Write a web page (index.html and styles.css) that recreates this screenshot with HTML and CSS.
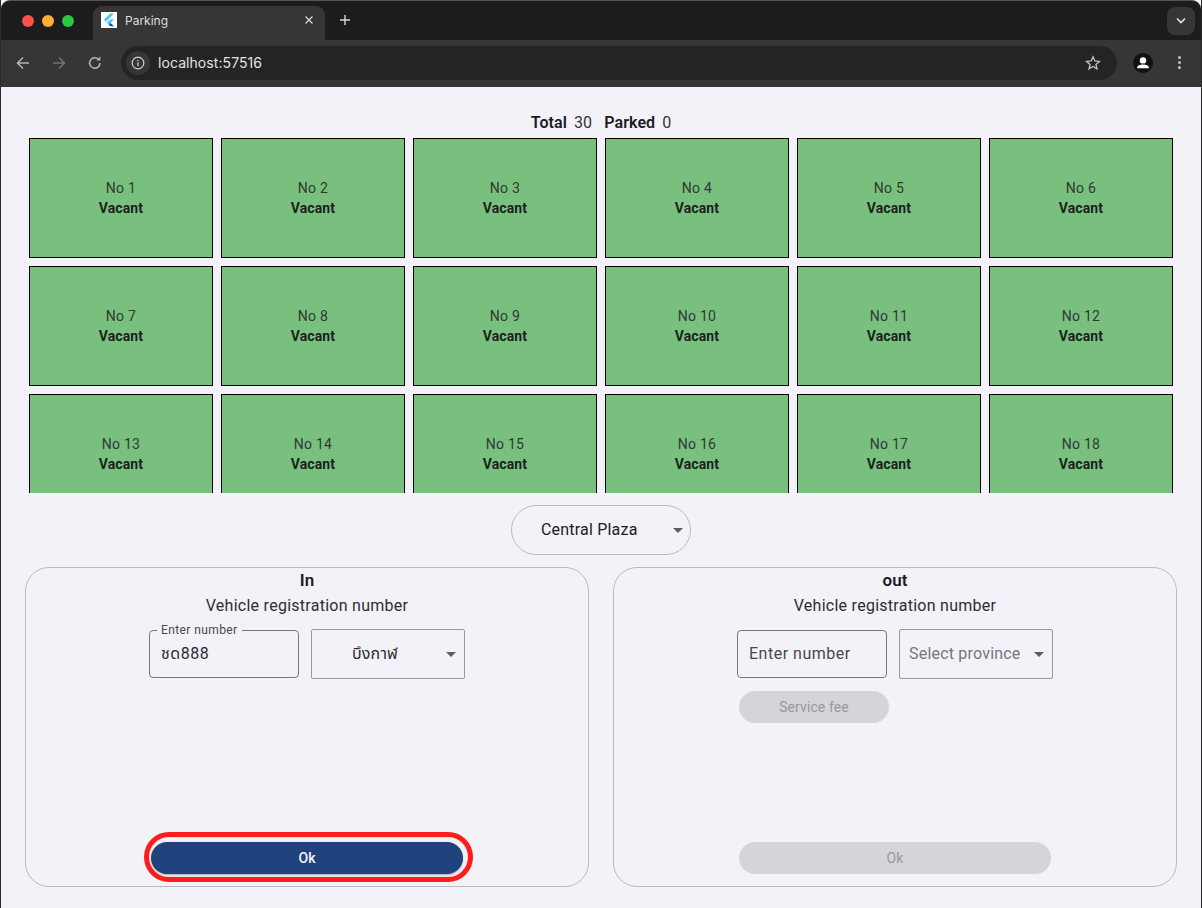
FILE: index.html
```html
<!DOCTYPE html>
<html lang="en">
<head>
    <meta charset="UTF-8">
    <meta name="viewport" content="width=device-width, initial-scale=1.0">
    <title>Parking</title>
    <link rel="stylesheet" href="styles.css">
</head>
<body>
    <div class="window">
        <!-- browser tab strip -->
        <div class="tabstrip">
            <div class="lights">
                <span class="light red"></span>
                <span class="light yellow"></span>
                <span class="light green"></span>
            </div>
            <div class="tab">
                <span class="favicon">
                    <svg width="16" height="16" viewBox="0 0 16 16">
                        <path d="M9.2 1.5 L3 7.8 L4.9 9.7 L13 1.5 Z" fill="#47c5fb"/>
                        <path d="M9.2 7.6 L5.9 10.8 L7.8 12.7 L13 7.6 Z" fill="#47c5fb"/>
                        <path d="M7.8 12.7 L9.2 14.3 L13 14.3 L9.7 10.9 Z" fill="#00569e"/>
                    </svg>
                </span>
                <span class="tab-title">Parking</span>
                <svg class="tab-close" width="10" height="10" viewBox="0 0 10 10">
                    <path d="M1.5 1.5 L8.5 8.5 M8.5 1.5 L1.5 8.5" stroke="#d6d6d6" stroke-width="1.3"/>
                </svg>
            </div>
            <svg class="new-tab" width="12" height="12" viewBox="0 0 12 12">
                <path d="M6 1 V11 M1 6 H11" stroke="#d8d8d8" stroke-width="1.4"/>
            </svg>
            <div class="tab-search">
                <svg width="12" height="8" viewBox="0 0 12 8">
                    <path d="M2 1.5 L6 5.5 L10 1.5" fill="none" stroke="#e6e6e6" stroke-width="1.6"/>
                </svg>
            </div>
        </div>

        <!-- browser toolbar -->
        <div class="toolbar">
            <svg class="nav-icon" width="16" height="16" viewBox="0 0 16 16">
                <path d="M14 8 H2.5 M8 2.5 L2.5 8 L8 13.5" fill="none" stroke="#b4b4b4" stroke-width="1.5"/>
            </svg>
            <svg class="nav-icon" width="16" height="16" viewBox="0 0 16 16">
                <path d="M2 8 H13.5 M8 2.5 L13.5 8 L8 13.5" fill="none" stroke="#727272" stroke-width="1.5"/>
            </svg>
            <svg class="nav-icon" width="16" height="16" viewBox="0 0 16 16">
                <path d="M13 8 A5.2 5.2 0 1 1 11.4 4.2" fill="none" stroke="#b4b4b4" stroke-width="1.5"/>
                <path d="M13.3 1.6 V5.6 H9.3 Z" fill="#b4b4b4"/>
            </svg>
            <div class="omnibox">
                <span class="site-info">
                    <svg width="14" height="14" viewBox="0 0 14 14">
                        <circle cx="7" cy="7" r="5.8" fill="none" stroke="#d0d0d0" stroke-width="1.2"/>
                        <path d="M7 6.2 V10 M7 4 V5.2" stroke="#d0d0d0" stroke-width="1.3"/>
                    </svg>
                </span>
                <span class="url">localhost:57516</span>
                <svg class="star" width="16" height="16" viewBox="0 0 16 16">
                    <path d="M8 1.8 L9.8 6 L14.4 6.4 L10.9 9.4 L12 13.9 L8 11.5 L4 13.9 L5.1 9.4 L1.6 6.4 L6.2 6 Z" fill="none" stroke="#c4c4c4" stroke-width="1.3"/>
                </svg>
            </div>
            <span class="avatar">
                <svg width="20" height="20" viewBox="0 0 20 20">
                    <circle cx="10" cy="7.4" r="3.2" fill="#fff"/>
                    <path d="M4 15.2 C4 12.2 7 11.4 10 11.4 C13 11.4 16 12.2 16 15.2 Z" fill="#fff"/>
                </svg>
            </span>
            <span class="kebab"><i></i><i></i><i></i></span>
        </div>

        <!-- app -->
        <main class="app">
            <div class="summary">
                <b>Total</b><span>30</span><b class="summary-gap">Parked</b><span>0</span>
            </div>

            <div class="slots-scroll">
                <div class="slots">
                    <div class="slot"><span>No 1</span><b>Vacant</b></div>
                    <div class="slot"><span>No 2</span><b>Vacant</b></div>
                    <div class="slot"><span>No 3</span><b>Vacant</b></div>
                    <div class="slot"><span>No 4</span><b>Vacant</b></div>
                    <div class="slot"><span>No 5</span><b>Vacant</b></div>
                    <div class="slot"><span>No 6</span><b>Vacant</b></div>
                    <div class="slot"><span>No 7</span><b>Vacant</b></div>
                    <div class="slot"><span>No 8</span><b>Vacant</b></div>
                    <div class="slot"><span>No 9</span><b>Vacant</b></div>
                    <div class="slot"><span>No 10</span><b>Vacant</b></div>
                    <div class="slot"><span>No 11</span><b>Vacant</b></div>
                    <div class="slot"><span>No 12</span><b>Vacant</b></div>
                    <div class="slot"><span>No 13</span><b>Vacant</b></div>
                    <div class="slot"><span>No 14</span><b>Vacant</b></div>
                    <div class="slot"><span>No 15</span><b>Vacant</b></div>
                    <div class="slot"><span>No 16</span><b>Vacant</b></div>
                    <div class="slot"><span>No 17</span><b>Vacant</b></div>
                    <div class="slot"><span>No 18</span><b>Vacant</b></div>
                </div>
            </div>

            <div class="plaza-row">
                <div class="plaza">
                    <span>Central Plaza</span>
                    <i class="caret"></i>
                </div>
            </div>

            <div class="panels">
                <section class="panel">
                    <h2>In</h2>
                    <p class="panel-sub">Vehicle registration number</p>
                    <div class="fields">
                        <div class="field filled">
                            <label>Enter number</label>
                            <span>ชด888</span>
                        </div>
                        <div class="dropdown">
                            <span class="dropdown-value">บึงกาฬ</span>
                            <i class="caret"></i>
                        </div>
                    </div>
                    <div class="ok-wrap">
                        <button class="btn btn-primary">Ok</button>
                        <span class="highlight"></span>
                    </div>
                </section>

                <section class="panel">
                    <h2>out</h2>
                    <p class="panel-sub">Vehicle registration number</p>
                    <div class="fields">
                        <div class="field">
                            <span>Enter number</span>
                        </div>
                        <div class="dropdown">
                            <span class="dropdown-hint">Select province</span>
                            <i class="caret"></i>
                        </div>
                    </div>
                    <div class="fee-row">
                        <button class="btn btn-disabled btn-fee">Service fee</button>
                    </div>
                    <div class="ok-wrap">
                        <button class="btn btn-disabled">Ok</button>
                    </div>
                </section>
            </div>
        </main>
    </div>
</body>
</html>
```

FILE: styles.css
```css
* {
    box-sizing: border-box;
}

html, body {
    margin: 0;
    padding: 0;
    height: 100%;
    background-color: #f3f2f9;
}

body {
    font-family: Roboto, "Noto Sans", "Noto Sans Thai", sans-serif;
    color: #1c1b1f;
    overflow: hidden;
}

.window {
    width: 1202px;
    height: 908px;
    display: flex;
    flex-direction: column;
    border-left: 1px solid #2a2a2a;
    border-right: 1px solid #2a2a2a;
}

/* browser chrome */
.tabstrip {
    height: 40px;
    flex: none;
    display: flex;
    align-items: flex-end;
    background-color: #1c1c1c;
    border-top: 1px solid #555;
    border-radius: 9px 9px 0 0;
    font-family: Inter, "Liberation Sans", Arial, sans-serif;
}

.lights {
    display: flex;
    gap: 8px;
    width: 92px;
    padding: 0 0 0 21px;
    align-self: center;
    margin-top: 1px;
}

.light {
    width: 12px;
    height: 12px;
    border-radius: 50%;
}

.red { background-color: #ff4f4d; }
.yellow { background-color: #ffae33; }
.green { background-color: #29c840; }

.tab {
    width: 232px;
    height: 34px;
    display: flex;
    align-items: center;
    padding: 0 11px 6px 8px;
    background-color: #363636;
    border-radius: 9px 9px 0 0;
}

.favicon {
    width: 16px;
    height: 16px;
    background-color: #fff;
    display: flex;
}

.tab-title {
    margin-left: 8px;
    font-size: 12px;
    color: #dedede;
    flex: 1;
}

.new-tab {
    margin: 0 0 14px 14px;
}

.tab-search {
    width: 28px;
    height: 28px;
    margin: 0 6px 5px auto;
    border-radius: 8px;
    background-color: #363636;
    display: flex;
    align-items: center;
    justify-content: center;
}

.toolbar {
    height: 47px;
    flex: none;
    display: flex;
    align-items: center;
    padding: 0 0 2px 14px;
    background-color: #363636;
    font-family: Inter, "Liberation Sans", Arial, sans-serif;
}

.nav-icon {
    margin-right: 20px;
}

.nav-icon:nth-child(3) {
    margin-right: 18px;
}

.omnibox {
    width: 996px;
    height: 34px;
    padding: 0 16px 0 5px;
    display: flex;
    align-items: center;
    background-color: #242424;
    border-radius: 17px;
}

.site-info {
    width: 24px;
    height: 24px;
    border-radius: 50%;
    background-color: #363636;
    display: flex;
    align-items: center;
    justify-content: center;
}

.url {
    margin-left: 8px;
    font-size: 14px;
    letter-spacing: 0.07px;
    color: #e3e3e3;
    flex: 1;
}

.avatar {
    width: 20px;
    height: 20px;
    margin-left: 16px;
    border-radius: 50%;
    background-color: #111;
    display: flex;
}

.kebab {
    margin-left: 25px;
    display: flex;
    flex-direction: column;
    gap: 2px;
}

.kebab i {
    width: 3px;
    height: 3px;
    border-radius: 50%;
    background-color: #c4c4c4;
}

/* app */
.app {
    flex: 1;
    display: flex;
    flex-direction: column;
    padding: 0 24px 20px;
    background-color: #f3f2f9;
    min-height: 0;
}

.summary {
    height: 51px;
    flex: none;
    padding-bottom: 5px;
    display: flex;
    align-items: flex-end;
    justify-content: center;
    gap: 7px;
    font-size: 16px;
    line-height: 20px;
    letter-spacing: 0.1px;
}

.summary b {
    font-weight: 600;
}

.summary span {
    color: #35333a;
}

.summary-gap {
    margin-left: 5px;
}

.slots-scroll {
    height: 355px;
    flex: none;
    overflow: hidden;
    padding: 0 4px;
}

.slots {
    display: grid;
    grid-template-columns: repeat(6, 184px);
    grid-auto-rows: 120px;
    gap: 8px;
}

.slot {
    display: flex;
    flex-direction: column;
    align-items: center;
    justify-content: center;
    background-color: #79c07f;
    border: 1px solid #000;
    font-size: 14px;
    line-height: 20px;
}

.slot span {
    letter-spacing: 0.25px;
    color: #333733;
}

.slot b {
    font-weight: 700;
    letter-spacing: 0.1px;
    color: #1c211d;
}

.plaza-row {
    display: flex;
    justify-content: center;
    margin-top: 12px;
    flex: none;
}

.plaza {
    width: 180px;
    height: 50px;
    padding: 0 7px 2px 29px;
    display: flex;
    align-items: center;
    justify-content: space-between;
    border: 1px solid #b8bcc2;
    border-radius: 25px;
    font-size: 16px;
    letter-spacing: 0.2px;
}

.plaza .caret {
    margin-top: 2px;
}

.caret {
    width: 0;
    height: 0;
    border-left: 5px solid transparent;
    border-right: 5px solid transparent;
    border-top: 5px solid #5f5d63;
    flex: none;
}

.panels {
    display: flex;
    gap: 24px;
    margin-top: 12px;
    flex: 1;
    min-height: 0;
}

.panel {
    width: 564px;
    height: 320px;
    display: flex;
    flex-direction: column;
    align-items: center;
    border: 1px solid #b8bcc2;
    border-radius: 24px;
}

.panel h2 {
    margin: 1px 0 0;
    font-size: 17px;
    line-height: 22px;
    font-weight: 600;
}

.panel-sub {
    margin: 3px 0 0;
    font-size: 16px;
    line-height: 24px;
    letter-spacing: 0.27px;
    color: #2e2d32;
}

.fields {
    margin-top: 11px;
    display: flex;
    align-items: center;
    gap: 12px;
    width: 316px;
}

.field {
    position: relative;
    width: 150px;
    height: 48px;
    padding: 0 11px 1px;
    display: flex;
    align-items: center;
    border: 1px solid #78767c;
    border-radius: 4px;
    font-size: 16px;
    letter-spacing: 0.5px;
    color: #49474d;
}

.field.filled {
    color: #2c2b30;
}

.field label {
    position: absolute;
    left: 7px;
    top: -8px;
    padding: 0 4px;
    font-size: 12px;
    line-height: 14px;
    letter-spacing: 0.4px;
    color: #49474d;
    background-color: #f3f2f9;
}

.dropdown {
    width: 154px;
    height: 50px;
    padding: 0 8px 1px 9px;
    display: flex;
    align-items: center;
    border: 1px solid #9a989e;
    border-radius: 2px;
    font-size: 16px;
    letter-spacing: 0.2px;
}

.dropdown .caret {
    margin-top: 1px;
}

.dropdown-value {
    flex: 1;
    text-align: center;
    padding-right: 17px;
    color: #2c2b30;
}

.dropdown-hint {
    flex: 1;
    color: #77757b;
    white-space: nowrap;
}

.fee-row {
    width: 316px;
    margin-top: 12px;
    padding-left: 2px;
}

.ok-wrap {
    position: relative;
    margin-top: auto;
    margin-bottom: 12px;
    display: flex;
}

.btn {
    width: 312px;
    height: 32px;
    padding: 0;
    border: 0;
    border-radius: 16px;
    font-family: inherit;
    font-size: 14px;
    font-weight: 500;
    letter-spacing: 0.1px;
}

.btn-primary {
    background-color: #1f437c;
    color: #f3f2f9;
    box-shadow: 0 1px 2px rgba(0, 0, 0, 0.3);
}

.btn-disabled {
    background-color: #d5d4da;
    color: #98979c;
    font-weight: 400;
}

.btn-fee {
    width: 150px;
}

/* red annotation ring drawn over the screenshot */
.highlight {
    position: absolute;
    left: -7px;
    top: -10px;
    width: 329px;
    height: 50px;
    border: 5px solid #fb1c1c;
    border-radius: 25px;
    background-color: transparent;
    box-shadow: inset 0 0 0 1px #e4e3e8;
}
```
